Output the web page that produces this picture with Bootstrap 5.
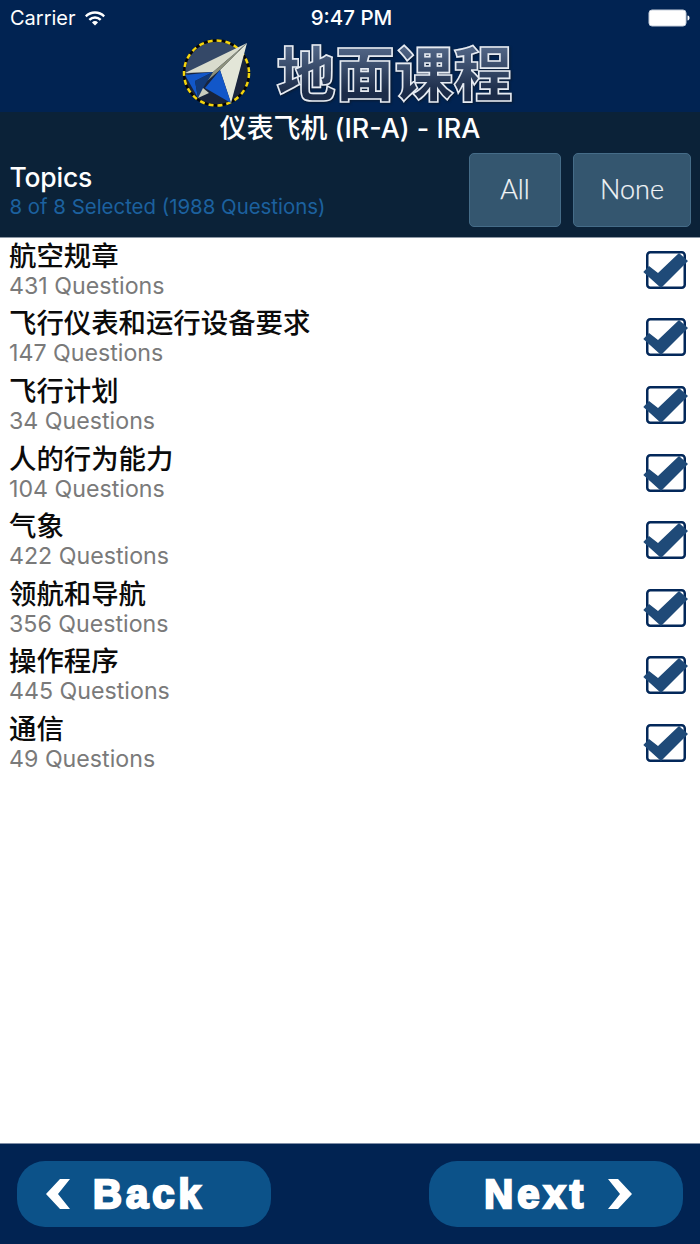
<!DOCTYPE html>
<html lang="zh">
<head>
<meta charset="utf-8">
<title>地面课程</title>
<link href="https://cdn.jsdelivr.net/npm/bootstrap@5.3.0/dist/css/bootstrap.min.css" rel="stylesheet">
<style>
html,body{margin:0;background:#fff}
.app-shell{width:700px;height:1244px;overflow:hidden;font-family:Inter,"Noto Sans CJK SC",sans-serif}
.top-head{height:112px;background:#012352;color:#fff}
.status-row{height:36px;padding:0 10px;font-size:20px;line-height:36px}
.status-side{width:200px}
.status-time{font-size:20.500px;font-weight:500;margin-left:3px}
.logo-row{height:76px;gap:24px;padding-right:5px}
.brand-title{font-family:"Noto Sans CJK SC",sans-serif;font-weight:900;font-size:59px;line-height:62px;margin-bottom:7px;background:linear-gradient(#5a6f90,#1b2b48 85%);-webkit-background-clip:text;background-clip:text;color:transparent;-webkit-text-stroke:1.600px #e6ebf2;filter:drop-shadow(1px 1px 1px #0a1a30)}
.sub-band{height:126px;background:#0b2238;color:#fff;border-bottom:1px solid #8d98a5}
.band-title{font-size:26.900px;line-height:33px;font-weight:500;height:34px}
.band-row{padding:7px 9px 0 9.500px;gap:12px}
.topics-text{padding-top:8px}
.topics-name{font-size:26.500px;line-height:32px;font-weight:500;letter-spacing:-.2px}
.topics-count{font-size:20.400px;line-height:27px;color:#1c619f}
.pick-btn{height:74px;background:#34566f;border:1px solid #456c88;border-radius:5px;color:#f2f5f7;font-family:Lato,sans-serif;font-weight:300;font-size:27px;-webkit-text-stroke:.25px #f2f5f7;display:flex;align-items:center;justify-content:center;padding:0 0 2px}
.pick-all{width:92px}
.pick-none{width:118px}
.topic-list{flex:1 1 auto;background:#fff}
.topic-row{height:67.600px;padding:0 11px 2px 9px}
.topic-text{padding-bottom:6px}
.topic-name{font-family:"Noto Sans CJK SC",sans-serif;font-size:27.400px;line-height:37px;color:#0b0b0b;font-weight:500}
.topic-num{font-size:23.200px;line-height:27px;color:#7a7a7a}
.foot-bar{height:101px;background:#012352;border-top:1px solid #7f8ea6;padding:17px 17px 0}
.nav-pill{width:254px;height:66px;border-radius:28px;background:#0c5289;color:#fff;font-family:"Liberation Sans",sans-serif;font-weight:700;font-size:40px;-webkit-text-stroke:2.400px #fff;letter-spacing:4px;border:0}
.pill-back{padding-left:28px;gap:22px}
.pill-next{padding-right:50px;gap:20px}
</style>
</head>
<body>
<div class="app-shell d-flex flex-column">
  <header class="top-head">
    <div class="status-row d-flex justify-content-between align-items-center">
      <div class="status-side d-flex align-items-center gap-2">Carrier
        <svg width="22" height="16" viewBox="0 0 22 16"><path d="M1 5.500a14 14 0 0 1 20 0l-1.600 1.700a11.700 11.700 0 0 0-16.800 0zM4.500 9a9 9 0 0 1 13 0l-1.700 1.700a6.600 6.600 0 0 0-9.600 0zM8 12.400a4 4 0 0 1 6 0L11 15.500z" fill="#fff"/></svg>
      </div>
      <div class="status-time">9:47 PM</div>
      <div class="status-side d-flex justify-content-end align-items-center">
        <svg width="42" height="18" viewBox="0 0 42 18"><rect x="1" y="1" width="37" height="16" rx="3" fill="#fff" stroke="#c8d0dc"/><path d="M39.500 6.500c1.500.3 2 1.200 2 2.500s-.5 2.200-2 2.500z" fill="#fff"/></svg>
      </div>
    </div>
    <div class="logo-row d-flex justify-content-center align-items-center">
      <svg width="70" height="70" viewBox="0 0 70 70">
        <circle cx="34.500" cy="34" r="32.500" fill="#18243c"/>
        <path d="M3 30A32.500 32.500 0 0 1 60 14L4 36z" fill="#344867"/>
        <circle cx="34.500" cy="34" r="32.500" fill="none" stroke="#050505" stroke-width="2.500"/>
        <circle cx="34.500" cy="34" r="32.500" fill="none" stroke="#f4d40e" stroke-width="2.500" stroke-dasharray="5 4"/>
        <path d="M65 4 3 34l28-1z" fill="#d9dccd"/>
        <path d="M65 4 38 31l11 33z" fill="#e3e6d8"/>
        <path d="M65 4 31 33l-6 9 13-11z" fill="#8d917c"/>
        <path d="M3 36l28-3-18 9 3 17z" fill="#1257c9"/>
        <path d="M31 33 13 42l3 17 5-10z" fill="#123a78"/>
        <path d="M16 59l5-10 6 5z" fill="#c9ccbd"/>
        <path d="M38 31 23 49l7 4 19 11z" fill="#1257c9"/>
      </svg>
      <div class="brand-title">地面课程</div>
    </div>
  </header>
  <section class="sub-band">
    <div class="band-title text-center">仪表飞机 (IR-A) - IRA</div>
    <div class="band-row d-flex align-items-start">
      <div class="topics-text flex-grow-1">
        <div class="topics-name">Topics</div>
        <div class="topics-count">8 of 8 Selected (1988 Questions)</div>
      </div>
      <button class="pick-btn pick-all" type="button">All</button>
      <button class="pick-btn pick-none" type="button">None</button>
    </div>
  </section>
  <main class="topic-list">
    <div class="topic-row d-flex justify-content-between align-items-center"><div class="topic-text"><div class="topic-name">航空规章</div><div class="topic-num">431 Questions</div></div><svg width="46" height="42" viewBox="0 0 46 42"><rect x="4.250" y="2.250" width="37.500" height="35.500" rx="3" fill="#fff" stroke="#03285a" stroke-width="2.500"/><path d="M.3 22 6 16l9 7L36 3l9 8-27 27z" fill="#1f4a78"/></svg></div>
    <div class="topic-row d-flex justify-content-between align-items-center"><div class="topic-text"><div class="topic-name">飞行仪表和运行设备要求</div><div class="topic-num">147 Questions</div></div><svg width="46" height="42" viewBox="0 0 46 42"><rect x="4.250" y="2.250" width="37.500" height="35.500" rx="3" fill="#fff" stroke="#03285a" stroke-width="2.500"/><path d="M.3 22 6 16l9 7L36 3l9 8-27 27z" fill="#1f4a78"/></svg></div>
    <div class="topic-row d-flex justify-content-between align-items-center"><div class="topic-text"><div class="topic-name">飞行计划</div><div class="topic-num">34 Questions</div></div><svg width="46" height="42" viewBox="0 0 46 42"><rect x="4.250" y="2.250" width="37.500" height="35.500" rx="3" fill="#fff" stroke="#03285a" stroke-width="2.500"/><path d="M.3 22 6 16l9 7L36 3l9 8-27 27z" fill="#1f4a78"/></svg></div>
    <div class="topic-row d-flex justify-content-between align-items-center"><div class="topic-text"><div class="topic-name">人的行为能力</div><div class="topic-num">104 Questions</div></div><svg width="46" height="42" viewBox="0 0 46 42"><rect x="4.250" y="2.250" width="37.500" height="35.500" rx="3" fill="#fff" stroke="#03285a" stroke-width="2.500"/><path d="M.3 22 6 16l9 7L36 3l9 8-27 27z" fill="#1f4a78"/></svg></div>
    <div class="topic-row d-flex justify-content-between align-items-center"><div class="topic-text"><div class="topic-name">气象</div><div class="topic-num">422 Questions</div></div><svg width="46" height="42" viewBox="0 0 46 42"><rect x="4.250" y="2.250" width="37.500" height="35.500" rx="3" fill="#fff" stroke="#03285a" stroke-width="2.500"/><path d="M.3 22 6 16l9 7L36 3l9 8-27 27z" fill="#1f4a78"/></svg></div>
    <div class="topic-row d-flex justify-content-between align-items-center"><div class="topic-text"><div class="topic-name">领航和导航</div><div class="topic-num">356 Questions</div></div><svg width="46" height="42" viewBox="0 0 46 42"><rect x="4.250" y="2.250" width="37.500" height="35.500" rx="3" fill="#fff" stroke="#03285a" stroke-width="2.500"/><path d="M.3 22 6 16l9 7L36 3l9 8-27 27z" fill="#1f4a78"/></svg></div>
    <div class="topic-row d-flex justify-content-between align-items-center"><div class="topic-text"><div class="topic-name">操作程序</div><div class="topic-num">445 Questions</div></div><svg width="46" height="42" viewBox="0 0 46 42"><rect x="4.250" y="2.250" width="37.500" height="35.500" rx="3" fill="#fff" stroke="#03285a" stroke-width="2.500"/><path d="M.3 22 6 16l9 7L36 3l9 8-27 27z" fill="#1f4a78"/></svg></div>
    <div class="topic-row d-flex justify-content-between align-items-center"><div class="topic-text"><div class="topic-name">通信</div><div class="topic-num">49 Questions</div></div><svg width="46" height="42" viewBox="0 0 46 42"><rect x="4.250" y="2.250" width="37.500" height="35.500" rx="3" fill="#fff" stroke="#03285a" stroke-width="2.500"/><path d="M.3 22 6 16l9 7L36 3l9 8-27 27z" fill="#1f4a78"/></svg></div>
  </main>
  <footer class="foot-bar d-flex justify-content-between align-items-start">
    <button class="nav-pill pill-back d-flex align-items-center justify-content-start" type="button">
      <svg width="26" height="30" viewBox="0 0 26 30"><path d="M15 0h10L13 15l12 15H15L1 15z" fill="#fff"/></svg><span>Back</span>
    </button>
    <button class="nav-pill pill-next d-flex align-items-center justify-content-end" type="button">
      <span>Next</span><svg width="26" height="30" viewBox="0 0 26 30"><path d="M11 0H1l12 15L1 30h10l14-15z" fill="#fff"/></svg>
    </button>
  </footer>
</div>
<script src="https://cdn.jsdelivr.net/npm/bootstrap@5.3.0/dist/js/bootstrap.bundle.min.js"></script>
</body>
</html>
